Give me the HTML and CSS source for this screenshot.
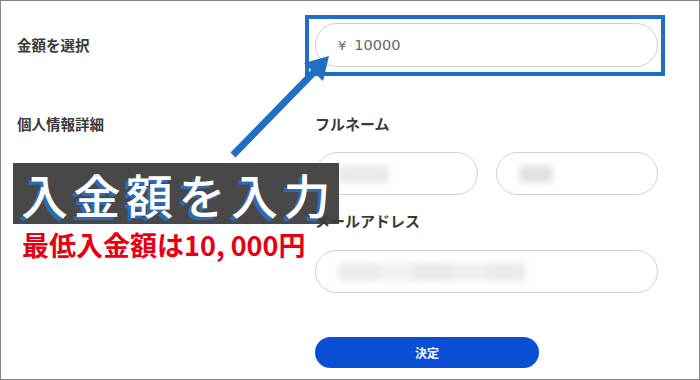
FILE: index.html
```html
<!DOCTYPE html>
<html lang="ja">
<head>
<meta charset="utf-8">
<link rel="stylesheet" href="styles.css">
</head>
<body>
<div class="page">
  <div class="row row-amount">
    <div class="label">金額を選択</div>
    <div class="field">
      <div class="input amount"><span class="yen">¥</span><span>10000</span></div>
    </div>
  </div>
  <div class="row row-personal">
    <div class="label">個人情報詳細</div>
    <div class="field">
      <div class="flabel">フルネーム</div>
      <div class="name-row">
        <div class="input"><span class="blur b1"></span></div>
        <div class="input"><span class="blur b2"></span></div>
      </div>
      <div class="flabel flabel-email">メールアドレス</div>
      <div class="input email"><span class="blur b3"></span></div>
      <button class="submit">決定</button>
    </div>
  </div>

  <div class="highlight"></div>
  <svg class="arrow" width="700" height="380" viewBox="0 0 700 380">
    <line x1="233" y1="155" x2="315" y2="71" stroke="#1f70c2" stroke-width="7"/>
    <polygon points="329,56 323,81 304,63" fill="#1f70c2"/>
  </svg>
  <div class="callout">
    <div class="callout-title">入金額を入力</div>
    <div class="callout-note">最低入金額は10<span class="comma">,</span>000円</div>
  </div>
</div>
</body>
</html>
```
FILE: styles.css
```css
* { box-sizing: border-box; }
html, body { margin: 0; padding: 0; }
body {
  width: 700px;
  height: 380px;
  background: #fff;
  font-family: "Noto Sans CJK JP", "Noto Sans", sans-serif;
  color: #333;
}
.page {
  position: relative;
  width: 700px;
  height: 380px;
  border: 1px solid #858585;
  padding: 22px 0 0 16px;
  overflow: hidden;
}
.row {
  display: grid;
  grid-template-columns: 298px 343px;
}
.row-amount { align-items: center; }
.row-personal { margin-top: 47px; align-items: start; }
.label {
  font-size: 14.5px;
  font-weight: 700;
  line-height: 20px;
  color: #3a3a3a;
}
.field { display: flex; flex-direction: column; }
.input {
  height: 44px;
  border: 1px solid #cfcfcf;
  border-radius: 22px;
  background: #fff;
  display: flex;
  align-items: center;
  padding-left: 22px;
}
.amount {
  font-family: "DejaVu Sans", sans-serif;
  font-size: 14.5px;
  color: #666;
  gap: 8px;
}
.yen { font-size: 13px; }
.flabel {
  font-size: 15px;
  font-weight: 700;
  line-height: 20px;
  color: #3a3a3a;
  position: relative;
  z-index: 3;
}
.name-row {
  display: grid;
  grid-template-columns: 162px 162px;
  gap: 18px;
  margin-top: 18px;
  padding-left: 1px;
}
.name-row .input { height: 43px; }
.flabel-email { margin-top: 16px; }
.email { margin-top: 19px; height: 43px; }
.blur {
  display: block;
  height: 18px;
  background: #e9e9e9;
  filter: blur(3px);
}
.b1 { width: 50px; }
.b2 { width: 34px; background: #e3e3e3; }
.b3 { width: 188px; background: linear-gradient(90deg, #ececec 0 20%, #f0f0f0 20% 40%, #e8e8e8 40% 60%, #eeeeee 60% 80%, #eaeaea 80%); }
.submit {
  margin-top: 44px;
  width: 224px;
  height: 31px;
  border: 0;
  border-radius: 16px;
  background: #0a4fd6;
  color: #fff;
  font-family: "Noto Sans CJK JP", sans-serif;
  font-size: 12px;
  font-weight: 700;
  padding: 0;
}
.highlight {
  position: absolute;
  left: 304px;
  top: 14px;
  width: 360px;
  height: 61px;
  border: 4px solid #1f70c2;
  z-index: 1;
}
.arrow {
  position: absolute;
  left: -1px;
  top: -1px;
  z-index: 2;
}
.callout {
  position: absolute;
  left: 12px;
  top: 162px;
  z-index: 2;
}
.callout-title {
  width: 326px;
  height: 61px;
  background: #484848;
  color: #fff;
  font-size: 47px;
  font-weight: 500;
  line-height: 61px;
  letter-spacing: 5.5px;
  padding-left: 8px;
  text-shadow: -3px 3px 0 #2a6bb8;
  white-space: nowrap;
}
.callout-note {
  margin-top: 7px;
  padding-left: 9px;
  color: #e60012;
  font-size: 27px;
  font-weight: 700;
  line-height: 28px;
  white-space: nowrap;
}
.comma { margin-right: 6px; }
```
